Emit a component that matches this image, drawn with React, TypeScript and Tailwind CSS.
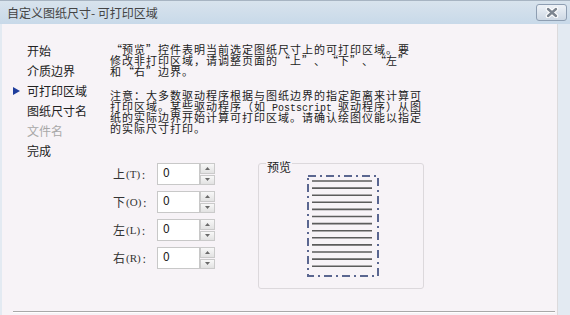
const FONT = { fontFamily: '"Noto Sans CJK SC", "Noto Sans", sans-serif' }

const NAV_ITEMS = [
  { label: '开始' },
  { label: '介质边界' },
  { label: '可打印区域', active: true },
  { label: '图纸尺寸名' },
  { label: '文件名', disabled: true },
  { label: '完成' }
]

const PARA_1 = [
  '“预览”控件表明当前选定图纸尺寸上的可打印区域。要',
  '修改非打印区域，请调整页面的“上”、“下”、“左”',
  '和“右”边界。'
]

const FIELDS = [
  { label: '上', key: 'T' },
  { label: '下', key: 'O' },
  { label: '左', key: 'L' },
  { label: '右', key: 'R' }
]

const CloseButton = () => {
  return (
    <div className="w-[31px] h-[17px] rounded-[3px] border border-[#8e9eb2] bg-gradient-to-b from-[#eef2f7] to-[#cdd8e4] flex items-center justify-center">
      <svg width="14" height="11" viewBox="0 0 14 11">
        <path d="M3 2 L11 9 M11 2 L3 9" stroke="#ffffff" strokeWidth="4.5" strokeLinecap="round" />
        <path d="M3 2 L11 9 M11 2 L3 9" stroke="#7c8590" strokeWidth="2.4" strokeLinecap="round" />
      </svg>
    </div>
  )
}

const Nav = () => {
  return (
    <div className="w-[108px] shrink-0 pt-[17px] pl-[11px]">
      {NAV_ITEMS.map((it, i) => (
        <div key={i} className="h-[20px] flex items-center">
          <span className="w-[14px] flex items-center">
            {it.active && (
              <svg width="7" height="8" viewBox="0 0 7 8">
                <path d="M0 0 L7 4 L0 8 Z" fill="#1f3d9c" />
              </svg>
            )}
          </span>
          <span
            className={it.disabled ? 'text-[12px] leading-[12px] text-[#a8a8a8]' : 'text-[12px] leading-[12px] text-[#222]'}
          >
            {it.label}
          </span>
        </div>
      ))}
    </div>
  )
}

const SpinField = ({ label, hotkey }: { label: string; hotkey: string }) => {
  return (
    <div className="h-[22px] flex items-center">
      <div className="w-[44px] flex items-center text-[#333]">
        <span className="text-[12px] leading-[12px]">{label}</span>
        <span className="text-[11px] leading-[11px] ml-[1px]" style={{ fontFamily: '"Liberation Serif", serif' }}>
          ({hotkey})
        </span>
        <span className="text-[11px] leading-[11px] ml-[2px]">:</span>
      </div>
      <div className="w-[43px] h-[22px] border border-[#c8c8c8] bg-white pl-[5px] text-[12px] leading-[16px] text-[#222]">
        0
      </div>
      <div className="w-[15px] h-[22px] flex flex-col gap-px">
        <div className="flex-1 border border-[#cacaca] bg-gradient-to-b from-[#f8f8f8] to-[#e2e2e2] flex items-center justify-center">
          <svg width="5" height="3" viewBox="0 0 5 3">
            <path d="M0 3 L2.5 0 L5 3 Z" fill="#6a6a6a" />
          </svg>
        </div>
        <div className="flex-1 border border-[#cacaca] bg-gradient-to-b from-[#f8f8f8] to-[#e2e2e2] flex items-center justify-center">
          <svg width="5" height="3" viewBox="0 0 5 3">
            <path d="M0 0 L5 0 L2.5 3 Z" fill="#6a6a6a" />
          </svg>
        </div>
      </div>
    </div>
  )
}

const PagePreview = () => {
  const lines = Array.from({ length: 13 }, (_, i) => 6 + i * 7.1)
  return (
    <svg width="72" height="102" viewBox="0 0 72 102">
      <rect x="1" y="1" width="70" height="100" fill="none" stroke="#5a6690" strokeWidth="2" strokeDasharray="8 4 2 4" />
      {lines.map((y, i) => (
        <line key={i} x1="5" x2="65" y1={y} y2={y} stroke="#5c5c5c" strokeWidth="1.6" />
      ))}
    </svg>
  )
}

// full-width quote marks: SimSun draws them in a 12px cell
const withQuotes = (text: string) =>
  text.split(/([“”])/).map((part, i) => {
    if (part === '“') {
      return (
        <span key={i} className="inline-block w-[12px] text-right tracking-normal">
          “
        </span>
      )
    }
    if (part === '”') {
      return (
        <span key={i} className="inline-block w-[12px] text-left tracking-normal">
          ”
        </span>
      )
    }
    return part
  })

const Line = ({ children }: { children: React.ReactNode }) => (
  <div className="h-[11px] whitespace-nowrap">{children}</div>
)

const Mono = ({ children }: { children: React.ReactNode }) => (
  <span className="text-[10px] tracking-normal" style={{ fontFamily: '"Liberation Mono", monospace' }}>
    {children}
  </span>
)

const App = () => {
  return (
    <div className="w-[570px] h-[315px] overflow-hidden flex flex-col bg-[#e3eaf2]" style={FONT}>
      <div className="h-[24px] shrink-0 flex items-center justify-between pl-[7px] pr-[3px] bg-gradient-to-b from-[#d8e3ed] to-[#c8d9e9] border-t border-[#a7b4c2]">
        <span className="text-[12px] leading-[12px] text-[#444]">自定义图纸尺寸- 可打印区域</span>
        <CloseButton />
      </div>
      <div className="flex-1 ml-[2px] mr-[12px] bg-[#f7f3f7] border-r border-[#dcdadc] flex flex-col">
        <div className="flex flex-1">
          <Nav />
          <div className="flex-1 pt-[20px] text-[12px] leading-[11px] text-[#222]">
            <div className="text-[11px] tracking-[1px]">
              {PARA_1.map((l, i) => (
                <Line key={i}>{withQuotes(l)}</Line>
              ))}
            </div>
            <div className="mt-[13px] text-[11px] tracking-[1px]">
              <Line>注意：大多数驱动程序根据与图纸边界的指定距离来计算可</Line>
              <Line>
                打印区域。某些驱动程序（如<Mono> Postscript </Mono>驱动程序）从图
              </Line>
              <Line>纸的实际边界开始计算可打印区域。请确认绘图仪能以指定</Line>
              <Line>的实际尺寸打印。</Line>
            </div>
            <div className="flex mt-[23px]">
              <div className="pt-[6px] pl-[3px] flex flex-col gap-[6px]">
                {FIELDS.map((f) => (
                  <SpinField key={f.key} label={f.label} hotkey={f.key} />
                ))}
              </div>
              <div className="relative ml-[43px] mt-[6px] w-[166px] h-[126px] border border-[#dcd8dc] rounded-[3px] pt-[11px] pl-[48px]">
                <span className="absolute top-[-3px] left-[7px] px-[1px] bg-[#f7f3f7] text-[12px] leading-[12px] text-[#222]">
                  预览
                </span>
                <PagePreview />
              </div>
            </div>
          </div>
        </div>
        <div className="h-px ml-[11px] mr-[2px] mb-[2px] bg-[#a9a9a9] border-b border-white box-content" />
      </div>
    </div>
  )
}

export default App
